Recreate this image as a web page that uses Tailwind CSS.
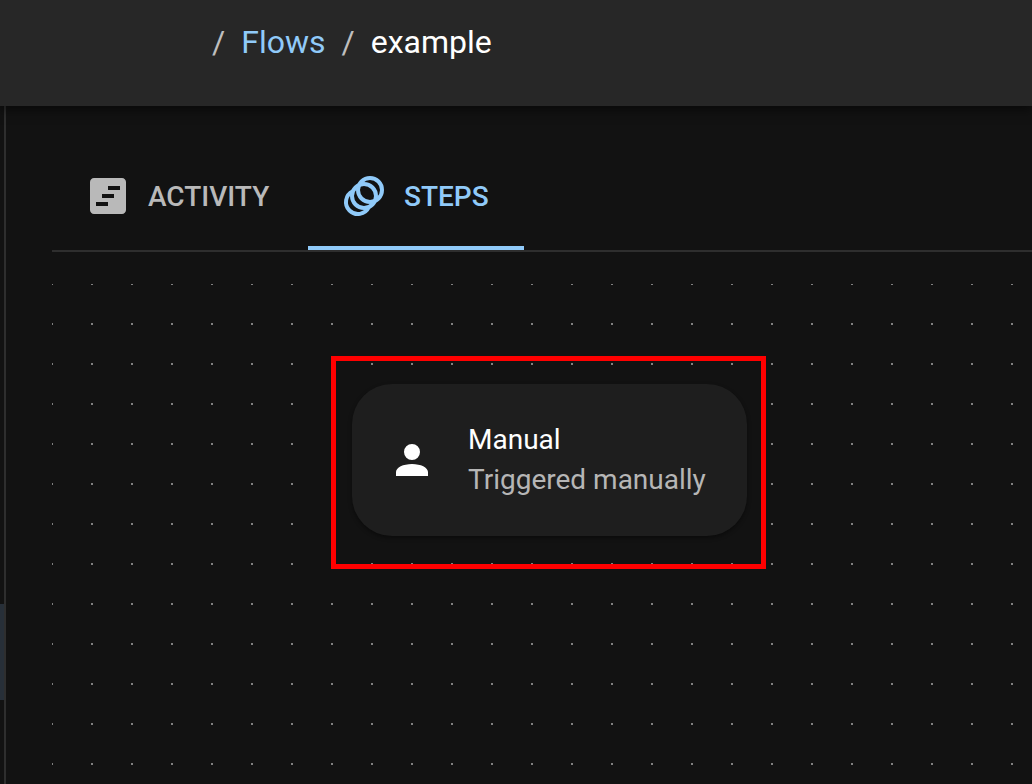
<!DOCTYPE html>
<html lang="en">
<head>
<meta charset="utf-8">
<title>Flows / example</title>
<script src="https://cdn.jsdelivr.net/npm/@tailwindcss/browser@4"></script>
</head>
<body class="flex h-screen flex-col overflow-hidden bg-[#121212] font-[Roboto,sans-serif] text-white">
  <header class="z-10 flex h-[106px] shrink-0 items-start bg-[#272727] pt-[18px] pl-[212px] shadow-[0_4px_10px_rgba(0,0,0,0.5)]">
    <nav aria-label="Breadcrumb">
      <ol class="flex items-center gap-4 text-[32px] leading-12">
        <li aria-hidden="true" class="text-[#bebebe]">/</li>
        <li><a href="#" class="text-[#90caf9]">Flows</a></li>
        <li aria-hidden="true" class="text-[#bebebe]">/</li>
        <li aria-current="page">example</li>
      </ol>
    </nav>
  </header>
  <div class="flex min-h-0 grow">
    <aside class="flex w-1.5 shrink-0 flex-col border-r-2 border-[#2e2e2e] pt-[498px]">
      <div class="h-24 bg-[#272f38]"></div>
    </aside>
    <main class="flex min-w-0 grow flex-col gap-8 pt-9 pl-[46px]">
      <div role="tablist" class="flex h-[110px] shrink-0 border-b-2 border-[#2e2e2e] text-[28px] font-medium">
        <button role="tab" aria-selected="false" class="flex w-64 items-center gap-4 border-b-4 border-transparent pt-1 pl-8 text-[#b9b9b9]">
          <svg class="size-12" viewBox="0 0 24 24" fill="currentColor" aria-hidden="true"><path d="M19 3H5c-1.100 0-2 .9-2 2v14c0 1.100.9 2 2 2h14c1.100 0 2-.9 2-2V5c0-1.100-.9-2-2-2zM12 17H6v-2h6v2zm3-4H9v-2h6v2zm3-4h-6V7h6v2z"/></svg>
          <span class="pt-0.5">ACTIVITY</span>
        </button>
        <button role="tab" aria-selected="true" class="flex w-[216px] items-center gap-4 border-b-4 border-[#90caf9] pt-1 pl-8 text-[#90caf9]">
          <svg class="size-12" viewBox="0 0 24 24" fill="none" stroke="currentColor" stroke-width="2" aria-hidden="true"><circle cx="15" cy="9" r="6"/><circle cx="12" cy="12" r="6"/><path d="M6.400 9.600A6 6 0 1 0 14.400 17.600"/></svg>
          <span class="pt-0.5">STEPS</span>
        </button>
      </div>
      <section aria-label="Flow steps" class="relative grow">
        <svg class="absolute inset-0 size-full" aria-hidden="true">
          <defs><pattern id="dots" x="-1" y="-1" width="40" height="40" patternUnits="userSpaceOnUse"><rect width="2" height="2" fill="#818181"/></pattern></defs>
          <rect width="100%" height="100%" fill="url(#dots)"/>
        </svg>
        <div class="absolute top-[72px] left-[279px] border-5 border-[#ff0000] pt-[23px] pr-3.5 pb-7 pl-4">
          <article class="flex h-38 w-[395px] items-center gap-8 rounded-[40px] bg-[#1e1e1e] pl-9 shadow-[0_2px_4px_rgba(0,0,0,0.4)]">
            <svg class="size-12" viewBox="0 0 24 24" fill="currentColor" aria-hidden="true"><path d="M12 4a4 4 0 1 1 0 8a4 4 0 1 1 0-8M12 14c4.420 0 8 1.790 8 4v2H4v-2c0-2.210 3.580-4 8-4z"/></svg>
            <div class="text-[28px] leading-10">
              <h2>Manual</h2>
              <p class="text-[#b6b6b6]">Triggered manually</p>
            </div>
          </article>
        </div>
      </section>
    </main>
  </div>
</body>
</html>
